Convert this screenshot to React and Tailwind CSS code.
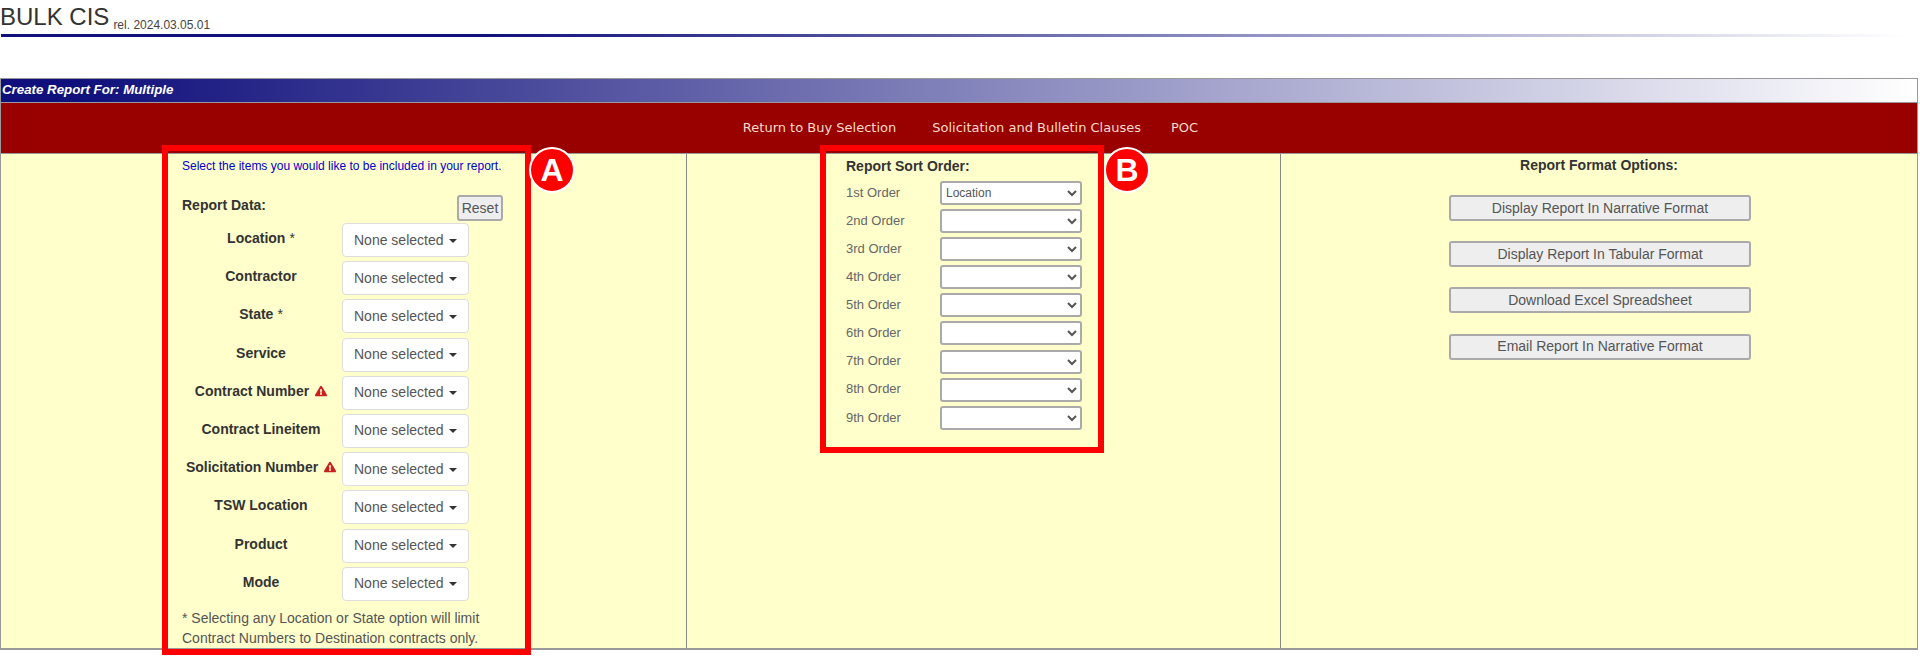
import React from 'react'
import { FaExclamationTriangle } from 'react-icons/fa'

const FILTERS = [
  { label: 'Location', star: true },
  { label: 'Contractor' },
  { label: 'State', star: true },
  { label: 'Service' },
  { label: 'Contract Number', warn: true },
  { label: 'Contract Lineitem' },
  { label: 'Solicitation Number', warn: true },
  { label: 'TSW Location' },
  { label: 'Product' },
  { label: 'Mode' },
]

const ORDERS = ['1st', '2nd', '3rd', '4th', '5th', '6th', '7th', '8th', '9th']

const FORMATS = [
  'Display Report In Narrative Format',
  'Display Report In Tabular Format',
  'Download Excel Spreadsheet',
  'Email Report In Narrative Format',
]

function Badge({ letter, className }) {
  return (
    <div className={`absolute top-[147px] flex h-[46px] w-[46px] items-center justify-center rounded-full border-2 border-white bg-[#ff0000] text-[32px] font-bold leading-none text-white ${className}`}>
      {letter}
    </div>
  )
}

export default function App() {
  return (
    <div className="relative h-[666px] w-[1920px] overflow-hidden bg-white font-['Liberation_Sans',Arial,sans-serif] text-[#333]">
      {/* Page title */}
      <div className="flex h-[34px] items-end text-[#333]">
        <span className="mb-[4px] text-[24px] leading-[27px]">BULK CIS</span>
        <span className="mb-[2px] ml-[4px] text-[12px] leading-[14px] text-[#444]">rel. 2024.03.05.01</span>
      </div>
      <div className="ml-[1px] h-[3px] w-[1905px] bg-linear-to-r/srgb from-[#10107c] from-25% to-white" />

      {/* Report panel */}
      <div className="mr-[2px] mt-[41px] border border-b-2 border-[#999]">
        <div className="flex h-[23px] items-center bg-linear-to-r/srgb from-[#10107c] from-[4%] to-white pb-[1px] pl-[1px] text-[13.3px] font-bold italic text-white">
          Create Report For: Multiple
        </div>
        <div className="flex h-[52px] items-center justify-center border-y border-[#999] bg-[#990000] pl-[23px] font-['DejaVu_Sans',sans-serif] text-[13px] text-[#f6dcc8]">
          <span>Return to Buy Selection</span>
          <span className="ml-[36px]">Solicitation and Bulletin Clauses</span>
          <span className="ml-[30px]">POC</span>
        </div>

        <div className="flex h-[494px] bg-[#ffffcc]">
          {/* Report data */}
          <div className="w-[686px] border-r border-[#888] pl-[181px] pt-[5px]">
            <p className="text-[12px] leading-[14px] text-[#0000cc]">
              Select the items you would like to be included in your report.
            </p>
            <div className="mt-[22px] flex h-[26px] w-[321px] items-start justify-between">
              <span className="mt-[2px] text-[14px] font-bold leading-[16px]">Report Data:</span>
              <button className="h-[26px] w-[46px] rounded-[3px] border-2 border-[#aaa] bg-[#eee] text-[14px] text-[#555]">Reset</button>
            </div>
            <div className="mt-[2px] flex flex-col gap-y-[4.2px]">
              {FILTERS.map(f => (
                <div key={f.label} className="flex h-[34px]">
                  <div className="flex w-[158px] items-start justify-center pt-[7px] text-[14px] font-bold leading-[16px]">
                    <span>{f.label}</span>
                    {f.star && <span className="ml-[4px] font-normal">*</span>}
                    {f.warn && <FaExclamationTriangle className="ml-[6px] mt-[2px] text-[12px] text-[#c9201f]" />}
                  </div>
                  <button className="ml-[2px] flex h-[34px] w-[127px] items-center rounded-[4px] border border-[#ddd] bg-white pl-[11px] text-[14px] text-[#555]">
                    None selected
                    <span className="ml-[5px] mt-[1px] h-0 w-0 border-x-[4px] border-t-[4px] border-x-transparent border-t-[#333]" />
                  </button>
                </div>
              ))}
            </div>
            <p className="mt-[7px] text-[14px] leading-[20px] text-[#555]">
              * Selecting any Location or State option will limit<br />
              Contract Numbers to Destination contracts only.
            </p>
          </div>

          {/* Sort order */}
          <div className="w-[594px] border-r border-[#888] pl-[159px] pt-[4px]">
            <div className="text-[14px] font-bold leading-[16px]">Report Sort Order:</div>
            <div className="mt-[7px] flex flex-col gap-y-[4.1px]">
              {ORDERS.map((o, i) => (
                <div key={o} className="flex h-[24px] items-center">
                  <span className="mb-[1px] w-[94px] text-[13px] text-[#666]">{o} Order</span>
                  <select
                    defaultValue={i === 0 ? 'Location' : ''}
                    className="h-[24px] w-[142px] rounded-[3px] border-2 border-[#aaa] bg-white text-[12px] text-[#555]"
                  >
                    <option value=""></option>
                    <option value="Location">Location</option>
                  </select>
                </div>
              ))}
            </div>
          </div>

          {/* Format options */}
          <div className="flex flex-1 flex-col pl-[168px] pt-[3px]">
            <div className="w-[300px] text-center text-[14px] font-bold leading-[16px]">Report Format Options:</div>
            <div className="mt-[22px] flex flex-col gap-y-[20.2px]">
              {FORMATS.map(label => (
                <button key={label} className="h-[26px] w-[302px] rounded-[3px] border-2 border-[#aaa] bg-[#eee] text-[14px] text-[#555]">
                  {label}
                </button>
              ))}
            </div>
          </div>
        </div>
      </div>

      {/* Callout boxes drawn over the panel */}
      <div className="pointer-events-none absolute left-[162px] top-[145px] h-[510px] w-[369px] border-[6px] border-[#ff0000]" />
      <Badge letter="A" className="left-[529px]" />
      <div className="pointer-events-none absolute left-[820px] top-[145px] h-[308px] w-[284px] border-[6px] border-[#ff0000]" />
      <Badge letter="B" className="left-[1104px]" />
    </div>
  )
}
